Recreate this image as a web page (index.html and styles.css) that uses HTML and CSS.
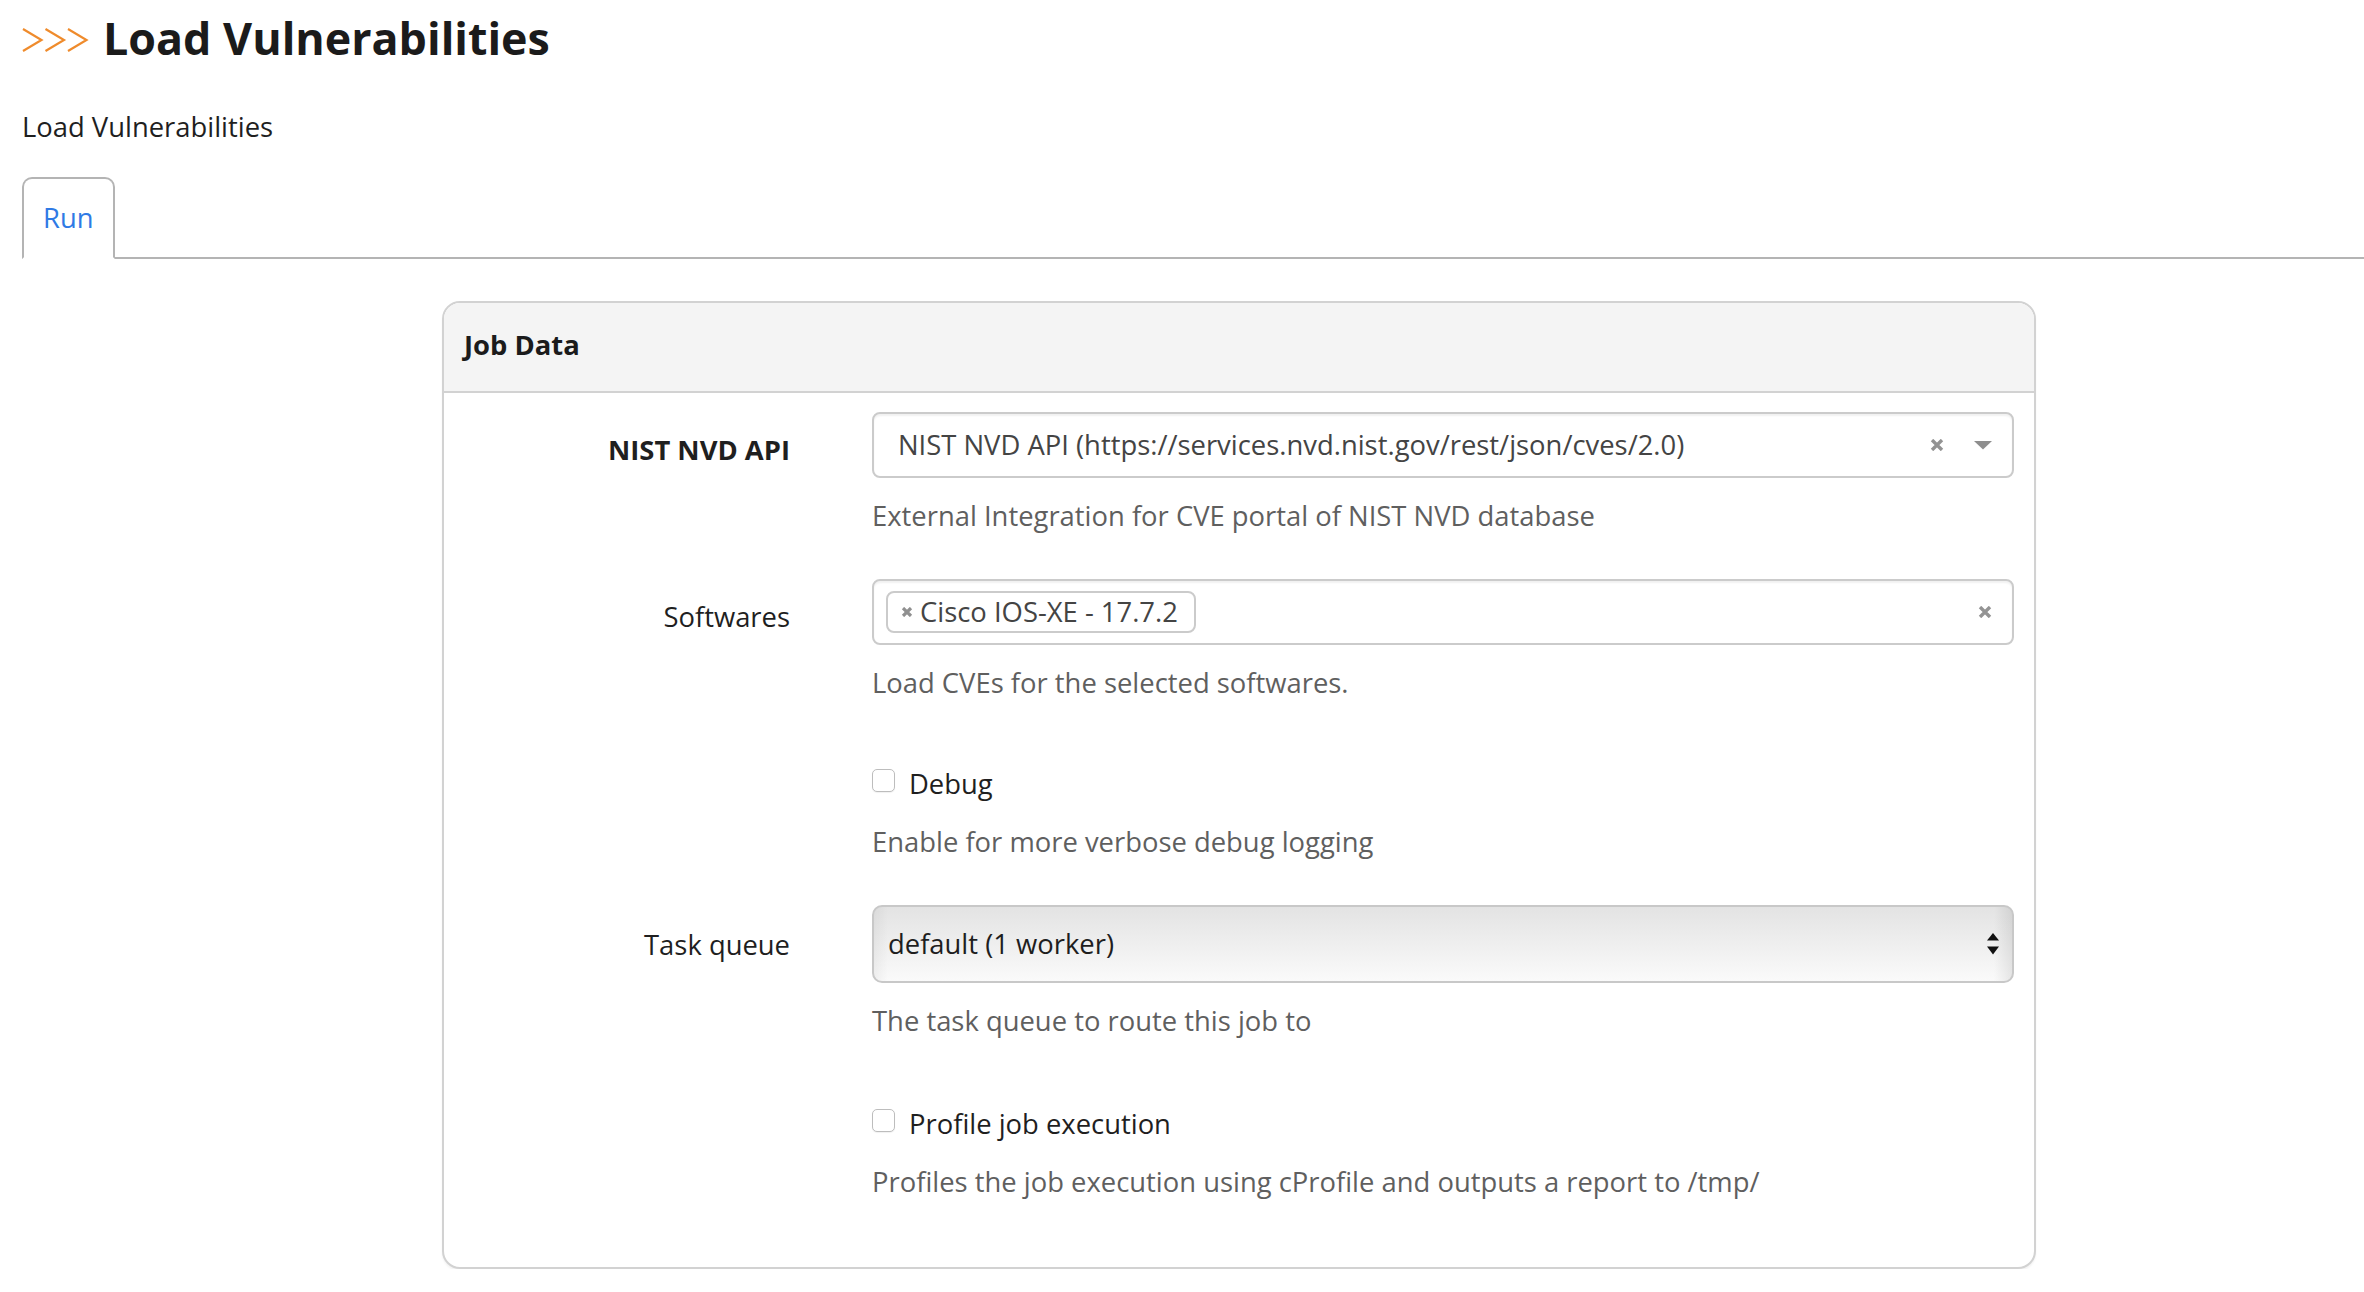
FILE: index.html
```html
<!DOCTYPE html>
<html lang="en">
<head>
<meta charset="utf-8">
<title>Load Vulnerabilities</title>
<link rel="stylesheet" href="styles.css">
</head>
<body>
<div class="page">
  <header class="page-title">
    <svg class="chevrons" viewBox="0 0 67 24" aria-hidden="true">
      <polyline points="1,1 19.5,12 1,23"/>
      <polyline points="23.5,1 42,12 23.5,23"/>
      <polyline points="46,1 64.5,12 46,23"/>
    </svg>
    <h1>Load Vulnerabilities</h1>
  </header>
  <p class="job-desc">Load Vulnerabilities</p>

  <ul class="tabs">
    <li class="tab"><a class="tab-link" href="#run">Run</a></li>
  </ul>

  <section class="panel">
    <div class="panel-heading">Job Data</div>
    <div class="panel-body">

      <div class="form-group">
        <label class="control-label required">NIST NVD API</label>
        <div class="control">
          <div class="select2">
            <span class="select2-value">NIST NVD API (https://services.nvd.nist.gov/rest/json/cves/2.0)</span>
            <svg class="clear" viewBox="0 0 14 12" aria-hidden="true"><path d="M2 1 L12 11 M12 1 L2 11"/></svg>
            <svg class="caret" viewBox="0 0 18 9" aria-hidden="true"><polygon points="0,0 18,0 9,8.5"/></svg>
          </div>
          <p class="help">External Integration for CVE portal of NIST NVD database</p>
        </div>
      </div>

      <div class="form-group">
        <label class="control-label">Softwares</label>
        <div class="control">
          <div class="select2 multi">
            <span class="tag">
              <svg class="tag-x" viewBox="0 0 12 10" aria-hidden="true"><path d="M2 1 L10 9 M10 1 L2 9"/></svg>
              <span>Cisco IOS-XE - 17.7.2</span>
            </span>
            <span class="grow"></span>
            <svg class="clear" viewBox="0 0 14 12" aria-hidden="true"><path d="M2 1 L12 11 M12 1 L2 11"/></svg>
          </div>
          <p class="help">Load CVEs for the selected softwares.</p>
        </div>
      </div>

      <div class="form-group check">
        <span class="control-label"></span>
        <div class="control">
          <label class="check-line"><input type="checkbox" class="checkbox"><span class="check-text">Debug</span></label>
          <p class="help">Enable for more verbose debug logging</p>
        </div>
      </div>

      <div class="form-group">
        <label class="control-label tall">Task queue</label>
        <div class="control">
          <div class="native-select">
            <span class="select2-value">default (1 worker)</span>
            <svg class="updown" viewBox="0 0 12 22" aria-hidden="true"><polygon points="6,0 12,7.5 0,7.5"/><polygon points="0,13.5 12,13.5 6,21.5"/></svg>
          </div>
          <p class="help">The task queue to route this job to</p>
        </div>
      </div>

      <div class="form-group check">
        <span class="control-label"></span>
        <div class="control">
          <label class="check-line"><input type="checkbox" class="checkbox"><span class="check-text">Profile job execution</span></label>
          <p class="help">Profiles the job execution using cProfile and outputs a report to /tmp/</p>
        </div>
      </div>

    </div>
  </section>
</div>
</body>
</html>
```
FILE: styles.css
```css
html, body {
  margin: 0;
  background: #ffffff;
}

body {
  font-family: "Open Sans", "Noto Sans", sans-serif;
  font-size: 27.4px;
  line-height: 40px;
  color: #1f1f1f;
}

.page {
  padding-left: 22px;
}

/* Title */
.page-title {
  display: flex;
  align-items: flex-start;
  padding-top: 10px;
}

.chevrons {
  flex: none;
  width: 67px;
  height: 24px;
  margin-top: 18px;
  fill: none;
  stroke: #ef8b2c;
  stroke-width: 2.2;
}

.page-title h1 {
  margin: 0 0 0 14px;
  font-size: 44.8px;
  line-height: 56px;
  font-weight: 700;
  color: #1b1b1b;
}

.job-desc {
  margin: 41px 0 0;
  color: #1f1f1f;
}

/* Tabs */
.tabs {
  display: flex;
  list-style: none;
  margin: 30px 0 0;
  padding: 0;
  border-bottom: 2px solid #b4b4b4;
}

.tab {
  margin-bottom: -2px;
}

.tab-link {
  display: block;
  padding: 19px 19px;
  border: 2px solid #b4b4b4;
  border-bottom-color: #ffffff;
  border-radius: 10px 10px 0 0;
  background: #ffffff;
  color: #2f7ae5;
  text-decoration: none;
}

/* Panel */
.panel {
  box-sizing: border-box;
  width: 1594px;
  margin: 42px 0 0 420px;
  border: 2px solid #d2d2d2;
  border-radius: 18px;
  background: #ffffff;
  box-shadow: 0 2px 2px rgba(0, 0, 0, 0.05);
}

.panel-heading {
  padding: 22px 20px 26px;
  background: #f4f4f4;
  border-bottom: 2px solid #d2d2d2;
  border-radius: 16px 16px 0 0;
  font-weight: 700;
  color: #1b1b1b;
}

.panel-body {
  padding: 19px 20px 65px 0;
}

.form-group {
  display: grid;
  grid-template-columns: 346px 1fr;
  column-gap: 82px;
  margin-bottom: 43px;
}

.form-group:last-child {
  margin-bottom: 0;
}

.form-group.check {
  padding-top: 18px;
}

.form-group.check:last-child {
  padding-top: 20px;
}

.control-label {
  display: block;
  padding-top: 18px;
  text-align: right;
  color: #1f1f1f;
}

.control-label.required {
  font-weight: 700;
}

.control-label.tall {
  padding-top: 20px;
}

.control {
  min-width: 0;
}

/* Select2-like boxes */
.select2 {
  display: flex;
  align-items: center;
  box-sizing: border-box;
  height: 66px;
  padding: 0 20px 0 24px;
  border: 2px solid #cbcbcb;
  border-radius: 8px;
  background: #ffffff;
  box-shadow: inset 0 2px 2px rgba(0, 0, 0, 0.06);
  color: #444444;
}

.select2.multi {
  padding-left: 12px;
}

.select2-value {
  flex: 1;
  min-width: 0;
  white-space: nowrap;
  overflow: hidden;
}

.grow {
  flex: 1;
}

.clear {
  flex: none;
  width: 14px;
  height: 12px;
  fill: none;
  stroke: #939393;
  stroke-width: 3.4;
}

.caret {
  flex: none;
  width: 18px;
  height: 9px;
  margin-left: 30px;
  fill: #8e8e8e;
}

.tag {
  display: flex;
  align-items: center;
  box-sizing: border-box;
  height: 42px;
  padding: 0 16px 0 13px;
  border: 2px solid #cbcbcb;
  border-radius: 8px;
  background: #ffffff;
  color: #444444;
}

.tag-x {
  flex: none;
  width: 12px;
  height: 10px;
  margin-right: 7px;
  fill: none;
  stroke: #909090;
  stroke-width: 3.2;
}

.help {
  margin: 18px 0 0;
  color: #5f5f5f;
}

/* Checkbox rows */
.check-line {
  display: flex;
  align-items: flex-start;
  color: #1f1f1f;
}

.checkbox {
  -webkit-appearance: none;
  appearance: none;
  flex: none;
  box-sizing: border-box;
  width: 23px;
  height: 23px;
  margin: 5px 0 0;
  border: 1.5px solid #bdbdbd;
  border-radius: 5px;
  background: #ffffff;
  box-shadow: 0 1px 1px rgba(0, 0, 0, 0.06);
}

.check-text {
  margin-left: 14px;
}

/* Native-looking select */
.native-select {
  display: flex;
  align-items: center;
  box-sizing: border-box;
  height: 78px;
  padding: 0 13px 0 14px;
  border: 2px solid #c8c8c8;
  border-radius: 10px;
  color: #1e1e1e;
  background:
    linear-gradient(to right, rgba(0, 0, 0, 0.045), rgba(0, 0, 0, 0) 14px, rgba(0, 0, 0, 0) calc(100% - 18px), rgba(0, 0, 0, 0.08)),
    linear-gradient(#e3e3e3, #fafafa);
}

.updown {
  flex: none;
  width: 12px;
  height: 22px;
  fill: #111111;
}
```
